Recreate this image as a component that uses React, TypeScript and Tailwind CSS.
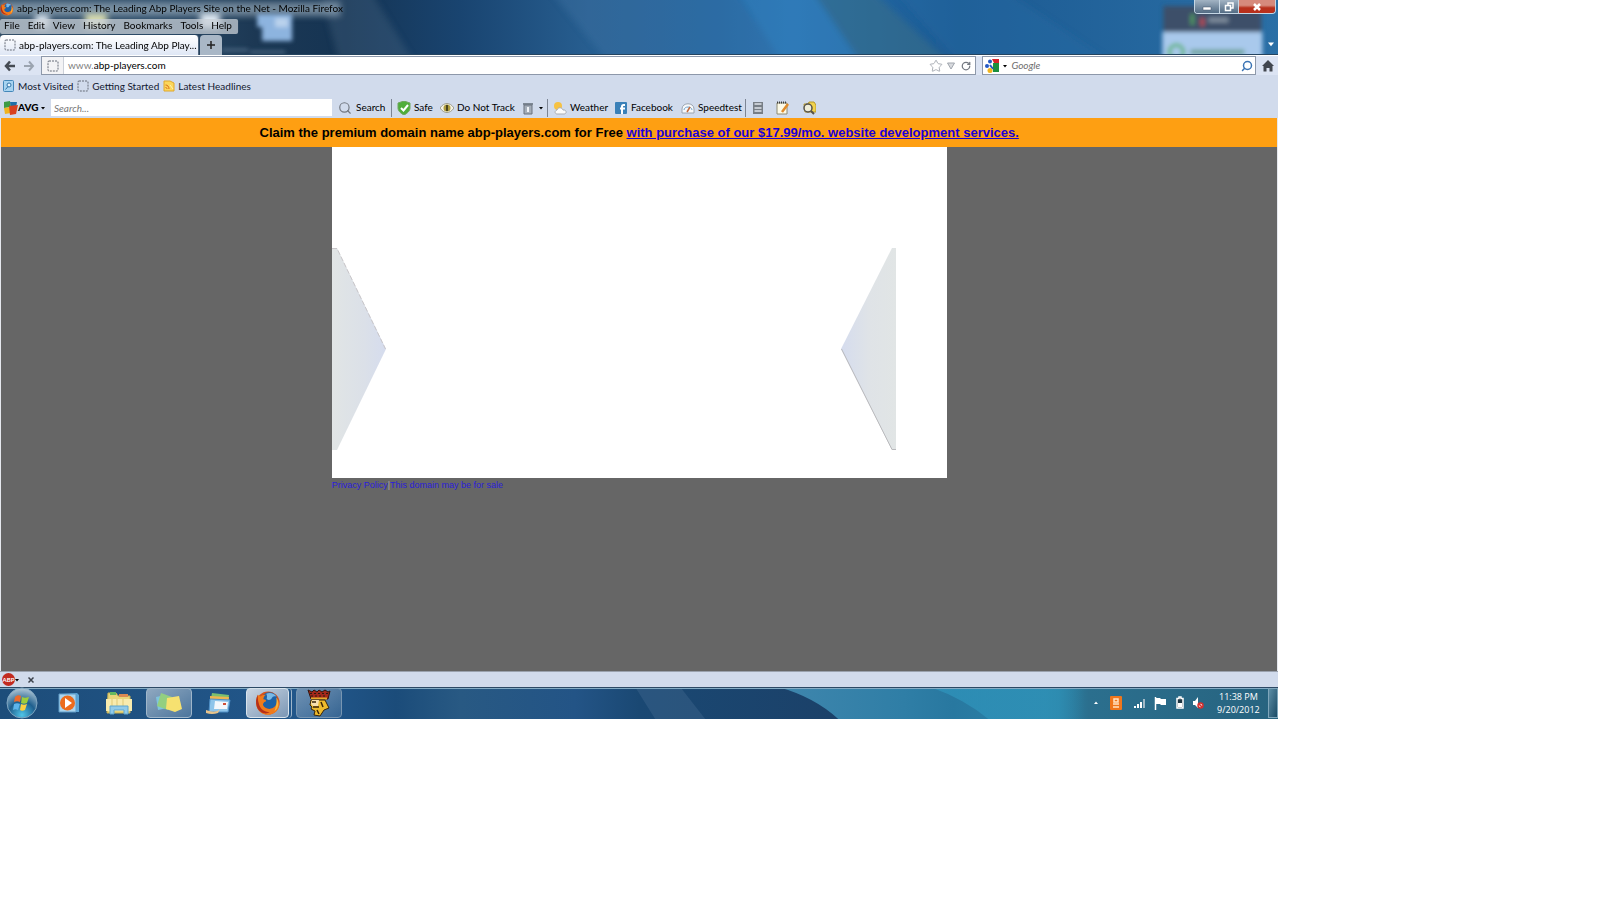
import React from 'react';
import { RotateCw, Search, Star } from 'lucide-react';

const MENUS = ['File', 'Edit', 'View', 'History', 'Bookmarks', 'Tools', 'Help'];

function FirefoxIcon({ className }: { className: string }) {
  return (
    <svg viewBox="0 0 28 28" className={className} aria-hidden="true">
      <circle cx="14" cy="14" r="12.5" fill="#d9531a" />
      <circle cx="15.5" cy="11.5" r="9" fill="#1d62a8" />
      <path d="M12 4c4-2 9-.5 11 3-3-1-4 0-5 2s-4 2-5 1 1-3-1-6z" fill="#79b9e6" />
      <path d="M3 5c1 1 2 1 3 2 2-2 4-2 6-2-2 1-3 3-3 5 2 0 3 1 3 2-3 1-4 3-3 5 2 4 9 5 13 0 2-3 2-6 1-9 4 5 4 11 0 15-5 5-14 5-19-1C0 17 1 10 3 5z" fill="#f07b1c" />
      <path d="M3 5c0 3 0 6 1 9 1 6 6 10 12 10-5 3-12 0-14-6C.500 13 1 9 3 5z" fill="#b5301a" />
      <path d="M23 8c3 5 3 11-2 15 1-4 3-8 2-15z" fill="#f9b53a" />
    </svg>
  );
}

function BlankPageIcon() {
  return (
    <svg viewBox="0 0 12 12" className="h-3 w-3 shrink-0" aria-hidden="true">
      <rect x="1" y="1" width="10" height="10" rx="1" fill="none" stroke="#666c78" strokeDasharray="2 1" />
    </svg>
  );
}

function Caret({ className = 'h-1 w-1' }: { className?: string }) {
  return (
    <svg viewBox="0 0 4 4" className={`shrink-0 ${className}`} aria-hidden="true">
      <path d="M0 1h4L2 3.500z" fill="currentColor" />
    </svg>
  );
}

// Desktop wallpaper showing through the glass of the title area
function TitleGlass() {
  return (
    <svg viewBox="0 0 1278 55" preserveAspectRatio="none" className="absolute inset-0 h-full w-full" aria-hidden="true">
      <defs>
        <linearGradient id="glass">
          <stop offset="0" stopColor="#334f68" />
          <stop offset=".12" stopColor="#2b4a67" />
          <stop offset=".2" stopColor="#1c3854" />
          <stop offset=".27" stopColor="#153453" />
          <stop offset=".36" stopColor="#194470" />
          <stop offset=".46" stopColor="#275e90" />
          <stop offset=".56" stopColor="#2065a0" />
          <stop offset=".62" stopColor="#256fae" />
          <stop offset=".75" stopColor="#1c5a92" />
          <stop offset="1" stopColor="#2a6fa6" />
        </linearGradient>
        <filter id="soft" x="-50%" y="-50%" width="200%" height="200%">
          <feGaussianBlur stdDeviation="3" />
        </filter>
        <filter id="slight" x="-10%" y="-50%" width="120%" height="200%">
          <feGaussianBlur stdDeviation="2" />
        </filter>
      </defs>
      <rect width="1278" height="55" fill="url(#glass)" />
      <g filter="url(#soft)">
        <path d="M320-9h50l46 74h-76z" fill="#4a6880" opacity=".35" />
        <path d="M550-9h184l52 74H610z" fill="#4a7fae" opacity=".25" />
        <path d="M736-9h76l50 74h-78z" fill="#3d8bc8" opacity=".4" />
        <path d="M812-9h60l80 74h-90z" fill="#3b6d86" opacity=".55" />
        <path d="M895-9h110l110 74H960z" fill="#276ca6" opacity=".4" />
        <rect x="0" y="2" width="340" height="14" fill="#a9bac8" opacity=".6" />
        <rect x="85" y="14" width="22" height="14" fill="#d8dcae" />
        <rect x="200" y="14" width="20" height="14" fill="#e0eaf4" />
        <rect x="35" y="16" width="14" height="12" fill="#e0eaf4" />
      </g>
      <rect x="0" y="19" width="238" height="15" rx="2" fill="#c9d0d7" opacity=".75" />
      <g filter="url(#slight)">
        <path d="M257 14h35v27h-30V27h-5z" fill="#8db4df" />
        <path d="M275 18h13v9h-13z" fill="#bad2ec" />
        <path d="M222 50h26M250 52h35" stroke="#5f7b96" strokeWidth="2" />
        <rect x="1163" y="6" width="98" height="27" fill="#3e5069" />
        <rect x="1162" y="32" width="100" height="34" fill="#a9c9ec" />
        <path d="M1192 14v11" stroke="#4f9460" strokeWidth="4" />
        <path d="M1202 18v8" stroke="#b84850" strokeWidth="4" />
        <path d="M1208 20h20" stroke="#7f8d9d" strokeWidth="5" />
        <circle cx="1176" cy="52" r="7" fill="none" stroke="#69b58c" strokeWidth="4" />
        <path d="M1190 52h54" stroke="#6fa39b" strokeWidth="5" />
      </g>
      <path d="M0 54.500h1278" stroke="#25445f" />
    </svg>
  );
}

function TitleArea() {
  return (
    <header className="relative flex h-[55px] shrink-0 flex-col overflow-hidden">
      <TitleGlass />
      <div className="relative flex h-[17px] justify-between">
        <div className="flex items-center">
          <FirefoxIcon className="h-3.5 w-3.5" />
          <h1 className="ml-[3px] text-[10px] whitespace-nowrap text-black">abp-players.com: The Leading Abp Players Site on the Net - Mozilla Firefox</h1>
        </div>
        <div className="mr-0.5 flex h-3.5 overflow-hidden rounded-b-sm border border-t-0 border-[#c5d6e4]">
          <button aria-label="Minimize" className="flex w-6 items-center justify-center bg-linear-to-b from-[#a2b3c3] to-[#536c84]">
            <svg viewBox="0 0 10 10" className="h-2.5 w-2.5"><path d="M1 5h8v3H1z" fill="#fff" stroke="#43536a" strokeWidth=".5" /></svg>
          </button>
          <button aria-label="Restore" className="flex w-5 items-center justify-center border-x border-[#c5d6e4] bg-linear-to-b from-[#a2b3c3] to-[#536c84]">
            <svg viewBox="0 0 10 10" className="h-2.5 w-2.5" fill="none" stroke="#fff" strokeWidth="1.500"><path d="M4 3V1h5v5H7" /><path d="M1.500 3.500h5v5h-5z" /></svg>
          </button>
          <button aria-label="Close" className="flex w-9 items-center justify-center bg-linear-to-b from-[#d68a7c] from-40% to-[#b8301c] to-60%">
            <svg viewBox="0 0 10 10" className="h-2.5 w-2.5"><path d="M2 2l6 6M8 2l-6 6" stroke="#fff" strokeWidth="2.500" /></svg>
          </button>
        </div>
      </div>
      <nav className="relative flex h-[17px] items-center gap-2 pl-1">
        {MENUS.map(menu => (
          <button key={menu} className="text-[10px] text-black">{menu}</button>
        ))}
      </nav>
      <div className="relative flex h-[21px] items-end">
        <div className="flex h-5 w-[199px] items-center gap-[3px] overflow-hidden rounded-t-sm border-r border-[#50657c] bg-linear-to-b from-white to-[#dfe7f5] pl-1">
          <BlankPageIcon />
          <span className="text-[10px] whitespace-nowrap text-black">abp-players.com: The Leading Abp Play...</span>
        </div>
        <button aria-label="Open a new tab" className="ml-px flex h-5 w-[22px] items-center justify-center rounded-t-sm bg-[#a9b7c6]">
          <svg viewBox="0 0 10 10" className="h-2.5 w-2.5"><path d="M5 1v8M1 5h8" stroke="#222" strokeWidth="1.500" /></svg>
        </button>
        <button aria-label="List all tabs" className="mr-1 mb-2 ml-auto text-white">
          <Caret className="h-1.5 w-1.5" />
        </button>
      </div>
    </header>
  );
}

function NavBar() {
  return (
    <div className="flex h-5 shrink-0 items-center border-t border-white bg-[#dce4f3] pr-1">
      <button aria-label="Back" className="ml-1 flex">
        <svg viewBox="0 0 12 12" className="h-3 w-3"><path d="M6 1.500L2 6l4 4.500M2 6h9" fill="none" stroke="#454b54" strokeWidth="2.500" /></svg>
      </button>
      <button aria-label="Forward" className="ml-[7px] flex">
        <svg viewBox="0 0 12 12" className="h-3 w-3"><path d="M6 1.500L10 6l-4 4.500M10 6H1" fill="none" stroke="#9ba4b0" strokeWidth="2" /></svg>
      </button>
      <div className="ml-1.5 flex h-[19px] flex-1 items-center border border-[#8d98aa] bg-white pr-1">
        <span className="flex h-full w-[22px] items-center justify-center border-r border-[#ccd0d8] bg-[#f3f3f5]">
          <BlankPageIcon />
        </span>
        <label htmlFor="address" className="pl-1 text-[10px] text-[#808080]">www.</label>
        <input id="address" defaultValue="abp-players.com" className="min-w-0 flex-1 text-[10px] text-black outline-none" />
        <button aria-label="Bookmark this page"><Star className="h-3.5 w-3.5 text-[#a0a5ad]" strokeWidth={1.5} /></button>
        <button aria-label="Show history" className="ml-1">
          <svg viewBox="0 0 8 8" className="h-2 w-2"><path d="M.500 1h7L4 7z" fill="#d8dade" stroke="#a0a5ad" /></svg>
        </button>
        <button aria-label="Reload" className="ml-1.5"><RotateCw className="h-2.5 w-2.5 text-[#737881]" strokeWidth={3} /></button>
      </div>
      <div className="ml-1.5 flex h-[19px] w-[274px] items-center border border-[#8d98aa] bg-white px-0.5">
        <svg viewBox="0 0 14 14" className="h-3.5 w-3.5 shrink-0" aria-hidden="true">
          <path d="M7 0h7v4H9z" fill="#d8232a" />
          <path d="M8 4h6v9H8z" fill="#1c8f3e" />
          <circle cx="5" cy="2.500" r="2" fill="#2459c4" />
          <circle cx="2" cy="7" r="2" fill="#2459c4" />
          <path d="M5 6l3 4" stroke="#2459c4" strokeWidth="2" />
          <circle cx="5" cy="11.500" r="2.500" fill="#f2b51d" />
        </svg>
        <button aria-label="Search engines" className="ml-1"><Caret /></button>
        <input aria-label="Google search" placeholder="Google" className="ml-1 min-w-0 flex-1 text-[10px] italic outline-none placeholder:text-[#6d6d6d]" />
        <button aria-label="Go"><Search className="h-3 w-3 -scale-x-100 text-[#3b74b4]" strokeWidth={3} /></button>
      </div>
      <button aria-label="Home" className="ml-1.5">
        <svg viewBox="0 0 12 12" className="h-3 w-3"><path d="M6 0l6 6h-1.500v5.500h-3V8h-3v3.500h-3V6H0z" fill="#42474f" /></svg>
      </button>
    </div>
  );
}

function BookmarksBar() {
  return (
    <div className="flex h-[22px] shrink-0 items-center gap-1 bg-[#d1dbec] pl-[3px] text-[10px] whitespace-nowrap text-[#111830]">
      <button className="flex items-center gap-[3px]">
        <svg viewBox="0 0 12 12" className="h-3 w-3" aria-hidden="true">
          <rect x=".500" y=".500" width="10" height="11" rx="1" fill="#a7d3f0" stroke="#4387b9" />
          <circle cx="6" cy="5" r="2" fill="#e8f6ff" stroke="#2f73a8" />
          <path d="M5 6.500L2.500 9.500" stroke="#2f73a8" />
        </svg>
        Most Visited
      </button>
      <a href="#getting-started" className="flex items-center gap-[3px]"><BlankPageIcon />Getting Started</a>
      <button className="flex items-center gap-[3px]">
        <svg viewBox="0 0 12 12" className="h-3 w-3" aria-hidden="true">
          <path d="M1 1h6l4 2v8H1z" fill="#fbd75c" stroke="#e0a82c" />
          <path d="M2.500 5c2 0 3.500 1.500 3.500 4M2.500 7.500c1 0 1.500.500 1.500 1.500" fill="none" stroke="#d96a16" />
          <path d="M7 5l3 4" stroke="#fff3b0" />
        </svg>
        Latest Headlines
      </button>
    </div>
  );
}

function Divider() {
  return <span className="h-[18px] w-px shrink-0 bg-[#7c8594]" />;
}

function AvgToolbar() {
  return (
    <div className="flex h-[21px] shrink-0 items-center bg-[#d1dbec] pl-1 text-[10px] whitespace-nowrap text-black">
      <button className="flex w-[41px] items-center font-black">
        <svg viewBox="0 0 14 14" className="h-3.5 w-3.5 shrink-0" aria-hidden="true">
          <path d="M0 1l6-1 1 6-7 1z" fill="#3d9a44" />
          <path d="M6 1h7l-1 6H7z" fill="#1e6fa8" />
          <path d="M0 7l7-1v6l-6 1z" fill="#f0b41f" />
          <path d="M5 5l9-1-2 9-6 1z" fill="#d8401f" />
        </svg>
        AVG
        <Caret className="ml-auto h-1 w-1" />
      </button>
      <input aria-label="AVG search" placeholder="Search..." className="ml-1.5 h-[17px] w-[281px] bg-white px-[3px] text-[10px] italic outline-none placeholder:text-[#777]" />
      <button className="ml-1.5 flex w-[53px] items-center gap-1">
        <Search className="h-3.5 w-3.5 shrink-0 text-[#717780]" />Search
      </button>
      <Divider />
      <button className="ml-[5px] flex w-[43px] items-center gap-[3px]">
        <svg viewBox="0 0 14 14" className="h-3.5 w-3.5 shrink-0" aria-hidden="true">
          <path d="M7 0l6 2v5c0 3-3 5.500-6 7-3-1.500-6-4-6-7V2z" fill="#4fae3a" stroke="#71a661" />
          <path d="M4 7l2.500 2.500L11 4" fill="none" stroke="#fff" strokeWidth="2" />
        </svg>
        Safe
      </button>
      <button className="flex w-[82px] items-center gap-[3px]">
        <svg viewBox="0 0 14 14" className="h-3.5 w-3.5 shrink-0" aria-hidden="true">
          <path d="M0 7c4-6 10-6 14 0-4 6-10 6-14 0z" fill="#f6f3e6" stroke="#9d9d8c" />
          <circle cx="7" cy="7" r="3.500" fill="#ad9c3c" />
          <path d="M7 4v6" stroke="#4a4520" strokeWidth="2" />
        </svg>
        Do Not Track
      </button>
      <button aria-label="Clean up" className="flex w-[25px] items-center justify-between">
        <svg viewBox="0 0 12 14" className="h-3.5 w-3" aria-hidden="true">
          <path d="M1 2h10v2H1z" fill="#7d8793" />
          <path d="M2 4h8v9H2z" fill="#a4adb8" stroke="#6a737f" />
          <path d="M6 6v5" stroke="#f0f3f7" strokeWidth="2" />
        </svg>
        <Caret className="mr-1 h-1 w-1" />
      </button>
      <Divider />
      <button className="ml-[5px] flex w-[61px] items-center gap-[3px]">
        <svg viewBox="0 0 14 14" className="h-3.5 w-3.5 shrink-0" aria-hidden="true">
          <circle cx="5" cy="5" r="4" fill="#f6c243" />
          <path d="M4 13c-2 0-3-3 0-4 1-3 5-3 6 0 4-.500 4 4 1 4z" fill="#fbfbfb" stroke="#a9aeb5" />
        </svg>
        Weather
      </button>
      <button className="flex w-[67px] items-center gap-[3px]">
        <svg viewBox="0 0 14 14" className="h-3.5 w-3.5 shrink-0" aria-hidden="true">
          <rect x="1" y="1" width="12" height="12" rx="1" fill="#3a80b8" />
          <path d="M11 4H9.500C8.500 4 8 4.500 8 5.500V13M6 7.500h5" fill="none" stroke="#fff" strokeWidth="2" />
        </svg>
        Facebook
      </button>
      <button className="flex w-[64px] items-center gap-[3px]">
        <svg viewBox="0 0 14 14" className="h-3.5 w-3.5 shrink-0" aria-hidden="true">
          <path d="M1 12V8c0-7 12-7 12 0v4z" fill="#f7f9fb" stroke="#9aa4b0" />
          <path d="M3 9c0-4 8-4 8 0" fill="none" stroke="#6fa3cc" />
          <path d="M6 11l3-5" stroke="#c46a3c" strokeWidth="1.500" />
        </svg>
        Speedtest
      </button>
      <Divider />
      <button aria-label="Calculator" className="ml-1.5">
        <svg viewBox="0 0 12 14" className="h-3.5 w-3">
          <path d="M1 1h10v12H1z" fill="#777e86" />
          <path d="M2.500 3h7M2.500 7h7M2.500 10h7" stroke="#dfe4ea" strokeWidth="1.500" />
        </svg>
      </button>
      <button aria-label="Notepad" className="ml-3">
        <svg viewBox="0 0 14 14" className="h-3.5 w-3.5">
          <path d="M1 2h10v11H1z" fill="#fdfbe9" stroke="#8c8a72" />
          <path d="M1 1.500h10" stroke="#3d3d3d" strokeWidth="2" strokeDasharray="1 1" />
          <path d="M12 3l-6 8" stroke="#e08b2b" strokeWidth="2.500" />
        </svg>
      </button>
      <button aria-label="File finder" className="ml-3">
        <svg viewBox="0 0 14 14" className="h-3.5 w-3.5">
          <path d="M2 3h4l1-2h5l2 3v7H3z" fill="#f1d34e" stroke="#b69a2d" />
          <circle cx="6" cy="7" r="4" fill="#f0eed8" stroke="#55524a" strokeWidth="1.500" />
          <path d="M9 10l3 3" stroke="#55524a" strokeWidth="2" />
        </svg>
      </button>
    </div>
  );
}

function SiteContent() {
  return (
    <main className="min-h-0 flex-1 overflow-hidden border-x border-[#e5e8ee] bg-[#666666] font-['Liberation_Sans',Arial,sans-serif]">
      <p className="flex h-[29px] items-center justify-center bg-[#fe9f12] text-[13px] font-bold text-black">
        <span>
          Claim the premium domain name abp-players.com for Free{' '}
          <a href="#offer" className="text-[#1a00d8] underline">with purchase of our $17.99/mo. website development services.</a>
        </span>
      </p>
      <div className="mx-auto w-[615px] max-w-full">
        <div className="flex justify-between bg-white pt-[101px] pr-[51px] pb-7">
          <svg viewBox="0 0 55 202" className="h-[202px] w-[55px]" role="img" aria-label="Previous">
            <defs>
              <linearGradient id="fadeRight"><stop offset="0" stopColor="#e1e5e5" /><stop offset=".6" stopColor="#dbe0e8" /><stop offset="1" stopColor="#d5dcee" /></linearGradient>
            </defs>
            <path d="M0 0h5l49 101-49 101H0z" fill="url(#fadeRight)" />
            <path d="M0 .500h5L53.500 101" fill="none" stroke="#c9c6c9" strokeDasharray="5 2" />
          </svg>
          <svg viewBox="0 0 55 202" className="h-[202px] w-[55px]" role="img" aria-label="Next">
            <defs>
              <linearGradient id="fadeLeft"><stop offset="0" stopColor="#d5dcee" /><stop offset=".5" stopColor="#dfe3e7" /><stop offset="1" stopColor="#e1e5e5" /></linearGradient>
            </defs>
            <path d="M55 0h-4L0 101l51 101h4z" fill="url(#fadeLeft)" />
            <path d="M.500 101l50.500 100.500h4" fill="none" stroke="#b9b9bc" />
          </svg>
        </div>
        <div className="flex h-4 items-center text-[9px] text-[#2a20d8]">
          <a href="#privacy">Privacy Policy</a>
          <span className="text-[#aaaaaa]">|</span>
          <a href="#sale">This domain may be for sale</a>
        </div>
      </div>
    </main>
  );
}

function AddonBar() {
  return (
    <div className="flex h-4 shrink-0 items-center border-t border-[#9aa2ae] bg-[#d1dbec] pl-0.5">
      <button className="flex items-center">
        <span className="flex h-[13px] w-[13px] items-center justify-center rounded-full bg-[#c22a20] text-[6px] font-bold text-white">ABP</span>
        <Caret />
      </button>
      <button aria-label="Close add-on bar" className="ml-2">
        <svg viewBox="0 0 8 8" className="h-2 w-2"><path d="M1.500 1.500l5 5M6.500 1.500l-5 5" stroke="#3c424c" strokeWidth="1.500" /></svg>
      </button>
    </div>
  );
}

function TaskbarGlass() {
  return (
    <svg viewBox="0 0 1278 32" preserveAspectRatio="none" className="absolute inset-0 h-full w-full" aria-hidden="true">
      <defs>
        <linearGradient id="bar">
          <stop offset="0" stopColor="#1d4d7a" />
          <stop offset=".25" stopColor="#22578b" />
          <stop offset=".31" stopColor="#1b4c7a" />
          <stop offset=".36" stopColor="#285983" />
          <stop offset=".45" stopColor="#235486" />
          <stop offset=".5" stopColor="#1a4873" />
          <stop offset=".65" stopColor="#1b4169" />
          <stop offset="1" stopColor="#1b4169" />
        </linearGradient>
        <linearGradient id="teal">
          <stop offset="0" stopColor="#3f86ad" />
          <stop offset=".25" stopColor="#2f7ea6" />
          <stop offset=".35" stopColor="#2878a0" />
          <stop offset=".56" stopColor="#2c86aa" />
          <stop offset=".62" stopColor="#2b6f8e" />
          <stop offset="1" stopColor="#27637f" />
        </linearGradient>
        <linearGradient id="glow">
          <stop offset="0" stopColor="#2f96be" />
          <stop offset=".75" stopColor="#2f92b8" />
          <stop offset="1" stopColor="#2f92b8" stopOpacity="0" />
        </linearGradient>
      </defs>
      <rect width="1278" height="32" fill="url(#bar)" />
      <path d="M635 0h45l25 32h-50z" fill="#4a6f94" opacity=".35" />
      <path d="M778 0h500v32H838q-24-22-60-32z" fill="url(#teal)" />
      <path d="M930 0h154v32h-96q-24-20-58-32z" fill="url(#glow)" opacity=".7" />
      <path d="M0 .500h1278" stroke="#2c4965" />
      <path d="M0 1.500h1278" stroke="#84acc6" />
    </svg>
  );
}

function Taskbar() {
  return (
    <footer className="relative flex h-8 shrink-0 items-center text-white">
      <TaskbarGlass />
      <button aria-label="Start" className="relative ml-1.5">
        <svg viewBox="0 0 32 32" className="h-8 w-8">
          <defs>
            <radialGradient id="orb" cx=".5" cy=".9" r=".9"><stop offset="0" stopColor="#4fc5e8" /><stop offset=".5" stopColor="#1f5f8e" /><stop offset="1" stopColor="#b5cad8" /></radialGradient>
          </defs>
          <circle cx="16" cy="16" r="15" fill="url(#orb)" stroke="#7fa5c0" />
          <path d="M9 10c2-2 4-2 6-1l-1 6c-2-1-4-1-6 0z" fill="#ee6a2c" />
          <path d="M16 10c2 1 4 1 7 0l-2 6c-2 1-4 1-6 0z" fill="#9fce3a" />
          <path d="M8 17c2-1 4-1 6 0l-2 6c-2-1-3-1-5 0z" fill="#5db4ec" />
          <path d="M15 17c2 1 4 1 6 0l-2 6c-2 1-4 1-5 0z" fill="#fcd03f" />
        </svg>
      </button>
      <div className="relative ml-2 flex h-[30px] gap-1">
        <button aria-label="Media Player" className="flex w-[46px] items-center justify-center">
          <svg viewBox="0 0 24 24" className="h-6 w-6">
            <path d="M4 3l16-1 2 2v17H5z" fill="#5ba5d6" />
            <path d="M2 3h17v18H2z" fill="#a9d5ef" stroke="#5e9bc7" />
            <circle cx="10.500" cy="12" r="7.500" fill="#ec6c1e" />
            <path d="M8 7l7 5-7 5z" fill="#fff" />
          </svg>
        </button>
        <button aria-label="Explorer" className="flex w-[46px] items-center justify-center">
          <svg viewBox="0 0 28 24" className="h-6 w-7">
            <path d="M3 2h8l2 3h12v17H2z" fill="#e9d67a" stroke="#c8b155" />
            <path d="M5 1h6v3H5z" fill="#66b95f" />
            <path d="M14 3h9v3h-9z" fill="#dc8a53" />
            <path d="M1 8h26v12H1z" fill="#f8ebae" />
            <path d="M7 8v8M12 8v8M18 8v8" stroke="#dfc977" />
            <path d="M5 23v-8h18v8h-4v-4H9v4z" fill="#91cbea" stroke="#5fa6cf" />
          </svg>
        </button>
        <button aria-label="Sticky Notes" className="flex w-[46px] items-center justify-center rounded-sm border border-[#9fb6ca] bg-linear-to-br from-white/50 to-white/20">
          <svg viewBox="0 0 28 24" className="h-6 w-7">
            <path d="M1 6l9-2 2 13-9 2z" fill="#7fc3dd" />
            <path d="M6 2l11 4-4 13L2 15z" fill="#93cf80" />
            <path d="M12 7l12-2 3 13-7 3-9-3z" fill="#f6e170" />
          </svg>
        </button>
        <button aria-label="Mail" className="flex w-[46px] items-center justify-center">
          <svg viewBox="0 0 26 24" className="h-6 w-[26px]">
            <path d="M6 2l17 2-1 9L4 13z" fill="#7cc06e" />
            <path d="M4 5l19 1-1 9-18 1z" fill="#efb650" />
            <path d="M4 8l20 1-2 12H3z" fill="#8fc5ea" stroke="#4e8fc6" />
            <path d="M9 10l13 1-1 7H8z" fill="#f3f7fb" />
            <path d="M17 12h3v2h-3z" fill="#cf4f38" />
            <path d="M0 19q10 4 14-1l-2 4q-6 2-12 0z" fill="#e7c48c" />
          </svg>
        </button>
        <button aria-label="Firefox" className="flex w-[46px] rounded-sm border-r border-[#9fb6ca]">
          <span className="flex h-full w-[43px] items-center justify-center rounded-sm border border-[#d8e3ec] bg-linear-to-br from-[#c9d5e2] to-[#7c97b5]">
            <FirefoxIcon className="h-[26px] w-[26px]" />
          </span>
        </button>
        <button aria-label="Card game" className="flex w-[46px] items-center justify-center rounded-sm border border-[#7896b2] bg-linear-to-br from-white/35 to-white/10">
          <svg viewBox="0 0 24 28" className="h-7 w-6">
            <path d="M1 1l4 2 2-2 3 2 2-2 3 2 3-2 3 2 2-1-2 8H4z" fill="#a3281b" stroke="#33150c" />
            <path d="M3 4.500h18M4 7h16" stroke="#2a1a10" strokeDasharray="2 2" />
            <path d="M4 9.500h16" stroke="#e5a92c" strokeWidth="2" />
            <path d="M4 11h14l4 8-5 2-4 6-6-1 1-4-4-2 1-2-2-2z" fill="#eebb2e" stroke="#3b2408" />
            <path d="M5 11h7l-1 6H6l-2-2z" fill="#f8dfae" />
            <path d="M5 13h4M6 18h6M10 21l2 4M14 13l2 5" stroke="#3b2408" strokeWidth="1.500" />
          </svg>
        </button>
      </div>
      <div className="relative ml-auto flex h-full items-center">
        <button aria-label="Show hidden icons" className="rotate-180"><Caret /></button>
        <svg viewBox="0 0 12 14" className="ml-3 h-3.5 w-3" aria-hidden="true">
          <rect width="12" height="14" rx="1" fill="#f0761c" />
          <path d="M4 3h4v3H4zM3 8h6M3 11h6" fill="none" stroke="#ffe4c4" strokeWidth="1.500" />
        </svg>
        <svg viewBox="0 0 12 12" className="ml-3 h-3 w-3" aria-hidden="true">
          <path d="M0 9h2v2H0zM3 7h2v4H3zM6 5h2v6H6z" fill="#fff" />
          <path d="M9 2h2v9H9z" fill="#9fb8c6" />
        </svg>
        <svg viewBox="0 0 12 14" className="ml-2 h-3.5 w-3" aria-hidden="true">
          <path d="M1.500 1v13" stroke="#fff" strokeWidth="1.500" />
          <path d="M2 2h4l1 1h5v6H7L6 8H2z" fill="#fff" />
        </svg>
        <svg viewBox="0 0 8 14" className="ml-2.5 h-3.5 w-2" aria-hidden="true">
          <path d="M3 1h2v1.500h2V12H1V2.500h2z" fill="#1d3542" stroke="#fff" strokeWidth="1.500" />
          <path d="M2 7h4v4H2z" fill="#fff" />
        </svg>
        <svg viewBox="0 0 12 12" className="ml-2 h-3 w-3" aria-hidden="true">
          <path d="M1 4h2l3-4v11L3 8H1z" fill="#fff" />
          <circle cx="8.500" cy="8.500" r="2.500" fill="#f3dada" stroke="#d32f2f" strokeWidth="1.500" />
          <path d="M7 7l3 3" stroke="#d32f2f" strokeWidth="1.500" />
        </svg>
        <time className="ml-2.5 w-12 text-center font-['Open_Sans',sans-serif] text-[9px] leading-[13px] whitespace-nowrap">11:38 PM<br />9/20/2012</time>
        <button aria-label="Show desktop" className="ml-1.5 h-[30px] w-2.5 border border-[#7fa6bb] bg-linear-to-br from-[#5d8ea6] to-[#1c4c66]" />
      </div>
    </footer>
  );
}

export default function App() {
  return (
    <div className="min-h-screen bg-white font-['Lato','Noto_Sans',sans-serif]">
      <div className="flex h-[80vh] w-4/5 flex-col overflow-hidden">
        <TitleArea />
        <NavBar />
        <BookmarksBar />
        <AvgToolbar />
        <SiteContent />
        <AddonBar />
        <Taskbar />
      </div>
    </div>
  );
}
